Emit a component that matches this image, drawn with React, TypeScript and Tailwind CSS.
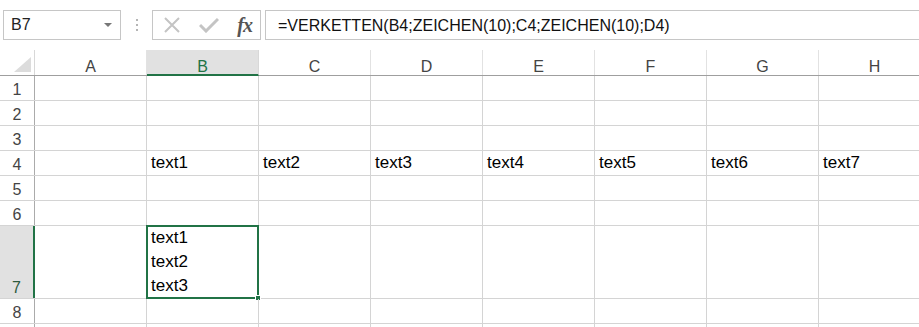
import React from "react";

const columns = ["A", "B", "C", "D", "E", "F", "G", "H"];

const rows: { label: string; height: string; cells: Record<string, string[]> }[] = [
  { label: "1", height: "h-[25px]", cells: {} },
  { label: "2", height: "h-[25px]", cells: {} },
  { label: "3", height: "h-[25px]", cells: {} },
  {
    label: "4",
    height: "h-[25px]",
    cells: {
      B: ["text1"],
      C: ["text2"],
      D: ["text3"],
      E: ["text4"],
      F: ["text5"],
      G: ["text6"],
      H: ["text7"],
    },
  },
  { label: "5", height: "h-[25px]", cells: {} },
  { label: "6", height: "h-[25px]", cells: {} },
  { label: "7", height: "h-[73px]", cells: { B: ["text1", "text2", "text3"] } },
  { label: "8", height: "h-[25px]", cells: {} },
  { label: "", height: "h-[25px]", cells: {} },
];

function FormulaBar() {
  return (
    <div className="flex items-center h-[50px] pt-[10px] pb-[10px] bg-white">
      <div className="ml-[3px] w-[118px] h-[30px] border border-[#c6c6c6] flex items-center justify-between pl-[7px] pr-[8px] text-[16px] text-[#222]">
        <span>B7</span>
        <svg width="8" height="5" viewBox="0 0 8 5">
          <path d="M0 0 L8 0 L4 4 Z" fill="#777" />
        </svg>
      </div>
      <div className="w-[31px] flex flex-col items-center gap-[3px]">
        <div className="w-[2px] h-[2px] bg-[#b5b5b5]" />
        <div className="w-[2px] h-[2px] bg-[#b5b5b5]" />
        <div className="w-[2px] h-[2px] bg-[#b5b5b5]" />
      </div>
      <div className="w-[109px] h-[30px] border border-[#c6c6c6] flex items-center pl-[10px] pr-[8px] justify-between">
        <svg width="18" height="16" viewBox="0 0 18 16">
          <path d="M2 1 L16 15 M16 1 L2 15" stroke="#c4c4c4" strokeWidth="2" fill="none" />
        </svg>
        <svg width="20" height="16" viewBox="0 0 20 16">
          <path d="M1 8 L7 14 L19 2" stroke="#c4c4c4" strokeWidth="3" fill="none" />
        </svg>
        <span className="font-['Liberation_Serif',serif] italic font-bold text-[20px] text-[#555] leading-none tracking-[-1px]">
          fx
        </span>
      </div>
      <div className="ml-[4px] flex-1 h-[30px] border-y border-l border-[#c6c6c6] flex items-center pl-[12px] pt-[1px] text-[16px] text-[#111]">
        =VERKETTEN(B4;ZEICHEN(10);C4;ZEICHEN(10);D4)
      </div>
    </div>
  );
}

function HeaderRow() {
  return (
    <div className="flex h-[26px] border-b border-[#9f9f9f]">
      <div className="w-[35px] shrink-0 border-r border-[#d8d8d8] flex items-end justify-end pr-[3px] pb-[3px]">
        <svg width="17" height="15" viewBox="0 0 17 15">
          <path d="M17 0 L17 15 L0 15 Z" fill="#dcdcdc" />
        </svg>
      </div>
      {columns.map((col) => (
        <div
          key={col}
          className={
            col === "B"
              ? "w-[112px] shrink-0 bg-[#e1e1e1] border-r border-[#d8d8d8] border-b-2 border-b-[#217346] -mb-px flex justify-center pt-[7px] leading-[20px] text-[16px] text-[#217346]"
              : "w-[112px] shrink-0 border-r border-[#e2e2e2] flex justify-center pt-[7px] leading-[20px] text-[16px] text-[#444]"
          }
        >
          {col}
        </div>
      ))}
    </div>
  );
}

export default function App() {
  return (
    <div className="w-[919px] h-[327px] overflow-hidden bg-white font-['Liberation_Sans',Arial,sans-serif]">
      <FormulaBar />
      <HeaderRow />
      {rows.map((row, idx) => (
        <div key={idx} className={`flex ${row.height} border-b border-[#d4d4d4]`}>
          <div
            className={
              row.label === "7"
                ? "w-[35px] shrink-0 bg-[#e1e1e1] border-r-2 border-[#217346] flex items-end justify-center leading-[20px] text-[16px] text-[#2d5a3d]"
                : "w-[35px] shrink-0 border-r border-[#ababab] flex items-end justify-center leading-[20px] text-[16px] text-[#444]"
            }
          >
            {row.label}
          </div>
          {columns.map((col) => {
            const lines = row.cells[col];
            const selected = row.label === "7" && col === "B";
            return (
              <div
                key={col}
                className="relative w-[112px] shrink-0 border-r border-[#d4d4d4] flex flex-col justify-end pl-[4px] text-[17px] leading-[24px] text-black whitespace-nowrap"
              >
                {lines?.map((t, i) => (
                  <span key={i}>{t}</span>
                ))}
                {selected && (
                  <div className="absolute -left-px -top-px -right-px -bottom-px border-2 border-[#217346]">
                    <div className="absolute -right-[4px] -bottom-[4px] w-[6px] h-[6px] bg-[#217346] border border-white" />
                  </div>
                )}
              </div>
            );
          })}
        </div>
      ))}
    </div>
  );
}
